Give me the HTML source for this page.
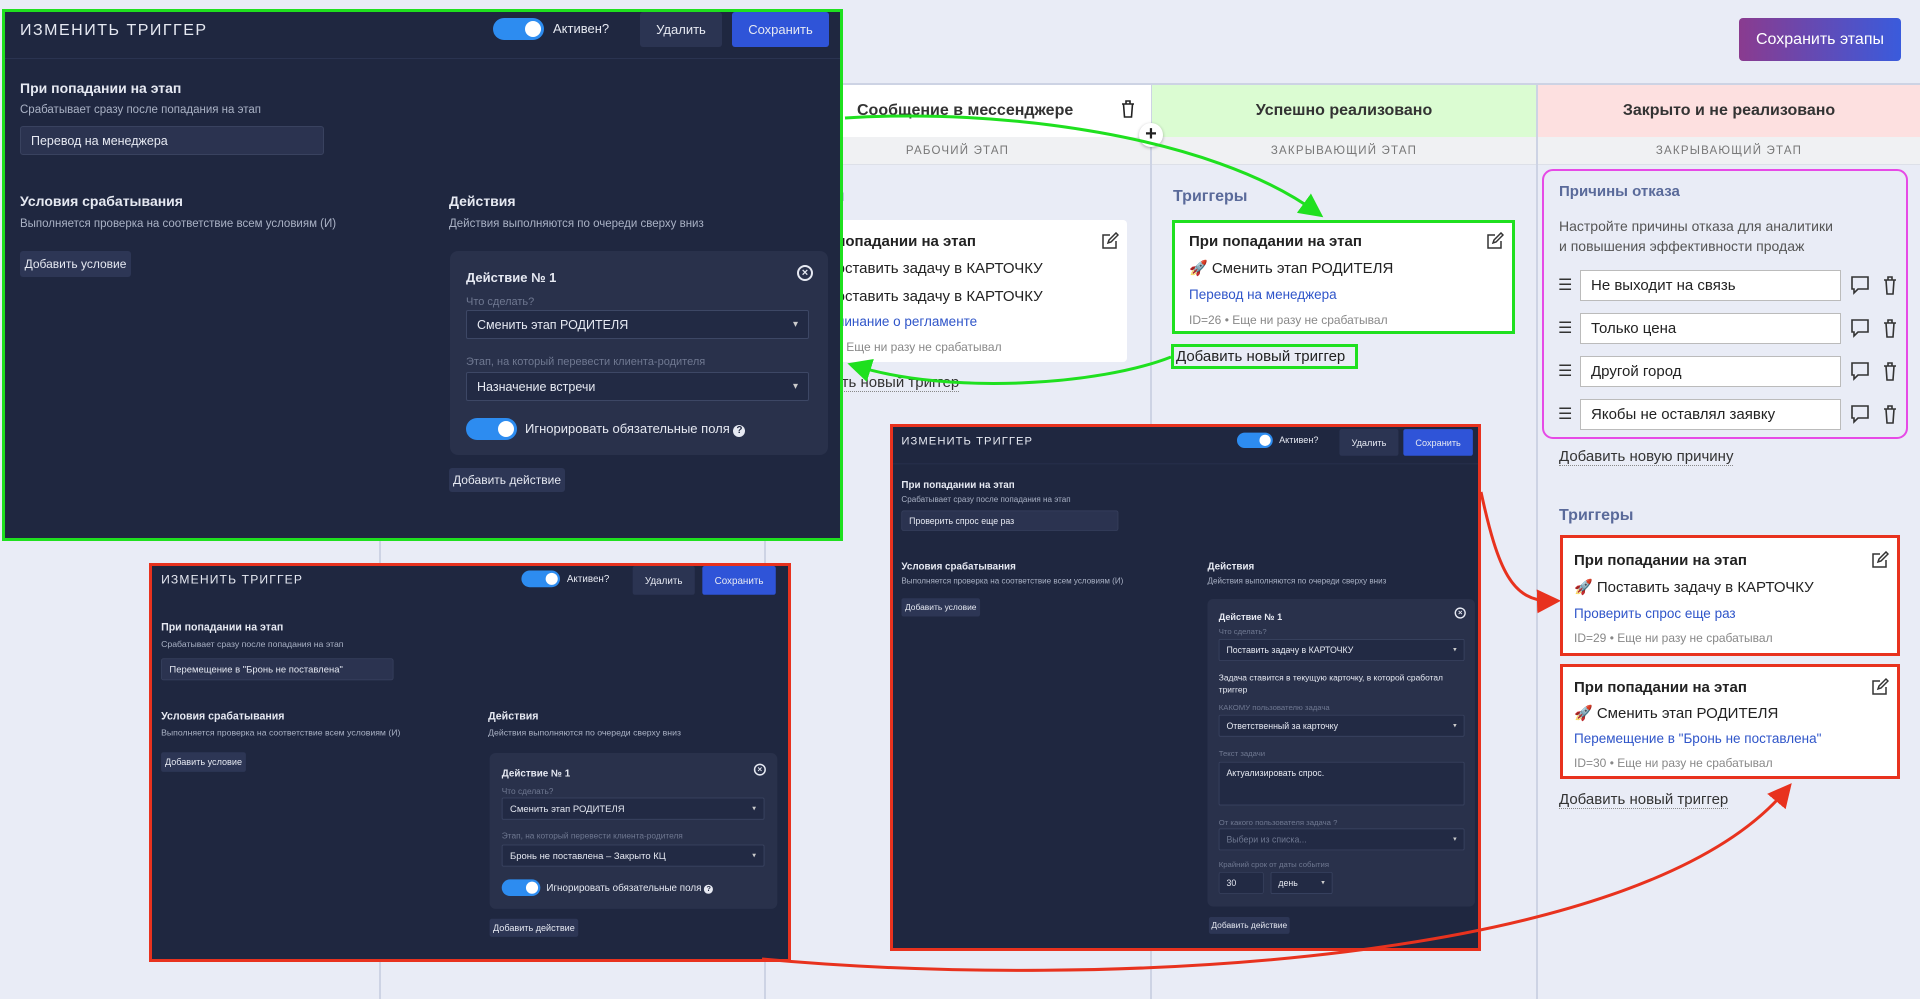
<!DOCTYPE html>
<html><head><meta charset="utf-8">
<style>
*{box-sizing:border-box;margin:0;padding:0}
body{width:1920px;height:999px;background:#e9ecf6;font-family:"Liberation Sans",sans-serif;position:relative;overflow:hidden;color:#222}
.a{position:absolute;white-space:nowrap}
.vl{position:absolute;top:83px;bottom:0;width:2px;background:#cdd3e4}
.colh{position:absolute;top:83px;height:54px;font-weight:bold;font-size:16px;color:#333;display:flex;align-items:center;justify-content:center;border-top:2px solid #cdd3e4}
.cols{position:absolute;top:137px;height:28px;background:#f0f1f3;font-size:11.5px;letter-spacing:1.2px;color:#777;display:flex;align-items:center;justify-content:center;border-bottom:1px solid #dde0e8}
.card{position:absolute;background:#fff}
.bt{font-weight:bold;font-size:15px;color:#222}
.tx{font-size:15px;color:#222}
.lk{font-size:13.5px;color:#2f55c9}
.gr{font-size:12px;color:#888}
.trh{font-weight:bold;font-size:16px;color:#5a6a9a}
.dash{border-bottom:1px dotted #888;font-size:15px;color:#333}
.pan{position:absolute;background:#1f2740;overflow:hidden}
.in{position:absolute;left:0;top:0;width:840px;transform-origin:0 0;color:#e6e9f2}
.in .a{color:#e6e9f2}
.ttl{font-size:16px;letter-spacing:1.5px}
.tg{position:absolute;width:51px;height:22px;border-radius:11px;background:#2d8cf0}
.tg::after{content:"";position:absolute;right:3px;top:3px;width:16px;height:16px;border-radius:50%;background:#fff}
.btn{position:absolute;display:flex;align-items:center;justify-content:center;font-size:13px;color:#e6e9f2;background:#2b3452;border-radius:3px}
.save{background:#2f54d8}
.h{font-weight:bold;font-size:14px}
.s{font-size:11.5px;color:#aab2c5!important}
.m{font-size:11px;color:#6f7891!important}
.inp{position:absolute;background:#2b3350;border:1px solid #39425f;border-radius:3px;font-size:12.5px;color:#e6e9f2;padding-left:10px;display:flex;align-items:center}
.sel{position:absolute;background:#222a44;border:1px solid #3d4765;border-radius:2px;font-size:12.5px;color:#e6e9f2;padding-left:10px;display:flex;align-items:center}
.sel::after{content:"▾";position:absolute;right:10px;font-size:10px;color:#ccc}
.ta{position:absolute;background:#222a44;border:1px solid #3d4765;border-radius:2px;font-size:12.5px;color:#e6e9f2;padding:8px 10px}
.box{position:absolute;background:#29314b;border-radius:8px}
.cl{position:absolute;width:16px;height:16px;border:2px solid #e6e9f2;border-radius:50%;font-size:11px;line-height:12px;text-align:center;color:#e6e9f2;font-weight:bold}
.sb{position:absolute;height:26px;font-size:12px;color:#e6e9f2;background:#2d3655;border-radius:3px;display:flex;align-items:center;justify-content:center}
.rin{position:absolute;left:1580px;width:261px;height:31px;background:#fff;border:1px solid #bbb;font-size:15px;padding-left:10px;display:flex;align-items:center}
.ham{position:absolute;left:1558px;font-size:16px;color:#333}
</style></head><body>

<div class="vl" style="left:379px"></div>
<div class="vl" style="left:764px"></div>
<div class="vl" style="left:1150px"></div>
<div class="vl" style="left:1536px"></div>

<div class="colh" style="left:765px;width:386px;background:#fff;justify-content:flex-start;padding-left:92px">Сообщение в мессенджере</div>
<svg class="a" style="left:1120px;top:99px" width="16" height="20" viewBox="0 0 16 20"><path d="M2 5h12M6 5V2h4v3M3.5 5l1 13h7l1-13" fill="none" stroke="#222" stroke-width="1.6"/></svg>
<div class="colh" style="left:1152px;width:384px;background:#dbfcd2">Успешно реализовано</div>
<div class="colh" style="left:1538px;width:382px;background:#fde0e0">Закрыто и не реализовано</div>
<div class="cols" style="left:765px;width:385px">РАБОЧИЙ ЭТАП</div>
<div class="cols" style="left:1152px;width:384px">ЗАКРЫВАЮЩИЙ ЭТАП</div>
<div class="cols" style="left:1538px;width:382px">ЗАКРЫВАЮЩИЙ ЭТАП</div>
<div class="a" style="left:1139px;top:123px;width:24px;height:24px;border-radius:50%;background:#fff;box-shadow:0 1px 3px rgba(0,0,0,.3);text-align:center;font-size:20px;line-height:23px;font-weight:bold">+</div>

<div class="a" style="left:1739px;top:18px;width:162px;height:43px;border-radius:4px;background:linear-gradient(90deg,#8a3b8f,#3a5bdc);color:#fff;font-size:16px;display:flex;align-items:center;justify-content:center">Сохранить этапы</div>

<div class="a trh" style="left:770px;top:188px">Триггеры</div>
<div class="card" style="left:800px;top:220px;width:327px;height:142px;border-radius:4px"></div>
<div class="a bt" style="left:803px;top:233px">При попадании на этап</div>
<div class="a tx" style="left:803px;top:259px">🚀 Поставить задачу в КАРТОЧКУ</div>
<div class="a tx" style="left:803px;top:287px">🚀 Поставить задачу в КАРТОЧКУ</div>
<div class="a lk" style="left:803px;top:314px">Напоминание о регламенте</div>
<div class="a gr" style="left:803px;top:340px">ID=25 • Еще ни разу не срабатывал</div>
<div class="a dash" style="left:790px;top:374px">Добавить новый триггер</div>
<svg class="a" style="left:1101px;top:232px" width="18" height="18" viewBox="0 0 18 18"><path d="M9 3H2v13h13V9M7 11l1-3 7-7 2 2-7 7z" fill="none" stroke="#333" stroke-width="1.5"/></svg>

<div class="a trh" style="left:1173px;top:188px">Триггеры</div>
<div class="card" style="left:1172px;top:220px;width:343px;height:114px;border:3px solid #1fe01f"></div>
<div class="a bt" style="left:1189px;top:233px">При попадании на этап</div>
<div class="a tx" style="left:1189px;top:259px">🚀 Сменить этап РОДИТЕЛЯ</div>
<div class="a lk" style="left:1189px;top:287px">Перевод на менеджера</div>
<div class="a gr" style="left:1189px;top:313px">ID=26 • Еще ни разу не срабатывал</div>
<svg class="a" style="left:1486px;top:232px" width="18" height="18" viewBox="0 0 18 18"><path d="M9 3H2v13h13V9M7 11l1-3 7-7 2 2-7 7z" fill="none" stroke="#333" stroke-width="1.5"/></svg>
<div class="a" style="left:1171px;top:344px;width:187px;height:25px;border:3px solid #1fe01f;font-size:15px;padding-left:2px;line-height:19px">Добавить новый триггер</div>

<div class="a" style="left:1542px;top:169px;width:366px;height:270px;border:2px solid #e64ae6;border-radius:11px"></div>
<div class="a trh" style="left:1559px;top:183px;font-size:15px">Причины отказа</div>
<div class="a" style="left:1559px;top:216px;font-size:14px;color:#555;line-height:20px">Настройте причины отказа для аналитики<br>и повышения эффективности продаж</div>
<div class="ham" style="top:275px">☰</div><div class="rin" style="top:270px">Не выходит на связь</div>
<div class="ham" style="top:318px">☰</div><div class="rin" style="top:313px">Только цена</div>
<div class="ham" style="top:361px">☰</div><div class="rin" style="top:356px">Другой город</div>
<div class="ham" style="top:404px">☰</div><div class="rin" style="top:399px">Якобы не оставлял заявку</div>
<svg class="a" style="left:1850px;top:275px" width="54" height="150" viewBox="0 0 54 150">
<g fill="none" stroke="#333" stroke-width="1.6">
<g id="ic"><path d="M2 2h16v12H8l-4 4v-4H2z"/><path d="M34 5h12M38 5V2h4v3M36 5l1 14h6l1-14"/></g>
<use href="#ic" y="43"/><use href="#ic" y="86"/><use href="#ic" y="129"/></g></svg>
<div class="a dash" style="left:1559px;top:448px">Добавить новую причину</div>
<div class="a trh" style="left:1559px;top:507px">Триггеры</div>
<div class="card" style="left:1560px;top:535px;width:340px;height:121px;border:3px solid #e8321e"></div>
<div class="a bt" style="left:1574px;top:552px">При попадании на этап</div>
<div class="a tx" style="left:1574px;top:578px">🚀 Поставить задачу в КАРТОЧКУ</div>
<div class="a lk" style="left:1574px;top:606px">Проверить спрос еще раз</div>
<div class="a gr" style="left:1574px;top:631px">ID=29 • Еще ни разу не срабатывал</div>
<div class="card" style="left:1560px;top:664px;width:340px;height:115px;border:3px solid #e8321e"></div>
<div class="a bt" style="left:1574px;top:679px">При попадании на этап</div>
<div class="a tx" style="left:1574px;top:704px">🚀 Сменить этап РОДИТЕЛЯ</div>
<div class="a lk" style="left:1574px;top:731px">Перемещение в "Бронь не поставлена"</div>
<div class="a gr" style="left:1574px;top:756px">ID=30 • Еще ни разу не срабатывал</div>
<svg class="a" style="left:1871px;top:551px" width="18" height="150" viewBox="0 0 18 150"><g fill="none" stroke="#333" stroke-width="1.5"><path d="M9 3H2v13h13V9M7 11l1-3 7-7 2 2-7 7z"/><path d="M9 130H2v13h13v-7M7 138l1-3 7-7 2 2-7 7z"/></g></svg>
<div class="a dash" style="left:1559px;top:791px">Добавить новый триггер</div>

<div class="pan" style="left:2px;top:9px;width:841px;height:532px;border:3px solid #1fe01f">
<div class="in">
<div class="a ttl" style="left:15px;top:10px">ИЗМЕНИТЬ ТРИГГЕР</div>
<div class="tg" style="left:488px;top:6px"></div>
<div class="a" style="left:548px;top:9px;font-size:13px">Активен?</div>
<div class="btn" style="left:635px;top:0;width:82px;height:35px">Удалить</div>
<div class="btn save" style="left:727px;top:0;width:97px;height:35px">Сохранить</div>
<div class="a" style="left:0;top:46px;width:840px;height:1px;background:#2a3350"></div>
<div class="a h" style="left:15px;top:68px">При попадании на этап</div>
<div class="a s" style="left:15px;top:92px">Срабатывает сразу после попадания на этап</div>
<div class="inp" style="left:15px;top:114px;width:304px;height:29px">Перевод на менеджера</div>
<div class="a h" style="left:15px;top:181px">Условия срабатывания</div>
<div class="a s" style="left:15px;top:206px">Выполняется проверка на соответствие всем условиям (И)</div>
<div class="sb" style="left:15px;top:239px;width:111px">Добавить условие</div>
<div class="a h" style="left:444px;top:181px">Действия</div>
<div class="a s" style="left:444px;top:206px">Действия выполняются по очереди сверху вниз</div>
<div class="box" style="left:445px;top:239px;width:378px;height:204px">
<div class="a h" style="left:16px;top:19px;font-size:13px">Действие № 1</div>
<div class="cl" style="left:347px;top:14px">×</div>
<div class="a m" style="left:16px;top:45px">Что сделать?</div>
<div class="sel" style="left:16px;top:59px;width:343px;height:29px">Сменить этап РОДИТЕЛЯ</div>
<div class="a m" style="left:16px;top:105px">Этап, на который перевести клиента-родителя</div>
<div class="sel" style="left:16px;top:121px;width:343px;height:29px">Назначение встречи</div>
<div class="tg" style="left:16px;top:167px"></div>
<div class="a" style="left:75px;top:170px;font-size:13px">Игнорировать обязательные поля <span style="display:inline-block;width:12px;height:12px;border-radius:50%;background:#e6e9f2;color:#1f2740;font-size:10px;text-align:center;line-height:12px;font-weight:bold">?</span></div>
</div>
<div class="sb" style="left:444px;top:456px;width:116px;height:24px">Добавить действие</div>
</div></div>

<div class="pan" style="left:149px;top:563px;width:642px;height:399px;border:3px solid #e8321e">
<div class="in" style="transform:scale(0.757)">
<div class="a ttl" style="left:12px;top:10px">ИЗМЕНИТЬ ТРИГГЕР</div>
<div class="tg" style="left:488px;top:6px"></div>
<div class="a" style="left:548px;top:9px;font-size:13px">Активен?</div>
<div class="btn" style="left:635px;top:0;width:82px;height:38px">Удалить</div>
<div class="btn save" style="left:727px;top:0;width:97px;height:38px">Сохранить</div>
<div class="a h" style="left:12px;top:72px">При попадании на этап</div>
<div class="a s" style="left:12px;top:98px">Срабатывает сразу после попадания на этап</div>
<div class="inp" style="left:12px;top:122px;width:307px;height:29px">Перемещение в "Бронь не поставлена"</div>
<div class="a h" style="left:12px;top:190px">Условия срабатывания</div>
<div class="a s" style="left:12px;top:215px">Выполняется проверка на соответствие всем условиям (И)</div>
<div class="sb" style="left:12px;top:246px;width:112px">Добавить условие</div>
<div class="a h" style="left:444px;top:190px">Действия</div>
<div class="a s" style="left:444px;top:215px">Действия выполняются по очереди сверху вниз</div>
<div class="box" style="left:446px;top:247px;width:380px;height:206px">
<div class="a h" style="left:16px;top:19px;font-size:13px">Действие № 1</div>
<div class="cl" style="left:349px;top:14px">×</div>
<div class="a m" style="left:16px;top:45px">Что сделать?</div>
<div class="sel" style="left:16px;top:59px;width:347px;height:29px">Сменить этап РОДИТЕЛЯ</div>
<div class="a m" style="left:16px;top:104px">Этап, на который перевести клиента-родителя</div>
<div class="sel" style="left:16px;top:121px;width:347px;height:29px">Бронь не поставлена – Закрыто КЦ</div>
<div class="tg" style="left:16px;top:167px"></div>
<div class="a" style="left:75px;top:170px;font-size:13px">Игнорировать обязательные поля <span style="display:inline-block;width:12px;height:12px;border-radius:50%;background:#e6e9f2;color:#1f2740;font-size:10px;text-align:center;line-height:12px;font-weight:bold">?</span></div>
</div>
<div class="sb" style="left:446px;top:466px;width:117px;height:24px">Добавить действие</div>
</div></div>

<div class="pan" style="left:890px;top:424px;width:591px;height:527px;border:3px solid #e8321e">
<div class="in" style="transform:scale(0.702)">
<div class="a ttl" style="left:12px;top:12px">ИЗМЕНИТЬ ТРИГГЕР</div>
<div class="tg" style="left:490px;top:8px"></div>
<div class="a" style="left:550px;top:11px;font-size:13px">Активен?</div>
<div class="btn" style="left:636px;top:3px;width:84px;height:38px">Удалить</div>
<div class="btn save" style="left:727px;top:3px;width:99px;height:38px">Сохранить</div>
<div class="a" style="left:0;top:52px;width:840px;height:1px;background:#2a3350"></div>
<div class="a h" style="left:12px;top:74px">При попадании на этап</div>
<div class="a s" style="left:12px;top:98px">Срабатывает сразу после попадания на этап</div>
<div class="inp" style="left:12px;top:119px;width:309px;height:29px">Проверить спрос еще раз</div>
<div class="a h" style="left:12px;top:190px">Условия срабатывания</div>
<div class="a s" style="left:12px;top:214px">Выполняется проверка на соответствие всем условиям (И)</div>
<div class="sb" style="left:12px;top:244px;width:112px">Добавить условие</div>
<div class="a h" style="left:448px;top:190px">Действия</div>
<div class="a s" style="left:448px;top:214px">Действия выполняются по очереди сверху вниз</div>
<div class="box" style="left:448px;top:245px;width:381px;height:438px">
<div class="a h" style="left:16px;top:18px;font-size:13px">Действие № 1</div>
<div class="cl" style="left:352px;top:12px">×</div>
<div class="a m" style="left:16px;top:41px">Что сделать?</div>
<div class="sel" style="left:16px;top:57px;width:350px;height:31px">Поставить задачу в КАРТОЧКУ</div>
<div class="a" style="left:16px;top:104px;font-size:12px;line-height:17px;white-space:normal;width:350px">Задача ставится в текущую карточку, в которой сработал триггер</div>
<div class="a m" style="left:16px;top:149px">КАКОМУ пользователю задача</div>
<div class="sel" style="left:16px;top:165px;width:350px;height:31px">Ответственный за карточку</div>
<div class="a m" style="left:16px;top:215px">Текст задачи</div>
<div class="ta" style="left:16px;top:232px;width:350px;height:62px">Актуализировать спрос.</div>
<div class="a m" style="left:16px;top:313px">От какого пользователя задача ?</div>
<div class="sel" style="left:16px;top:327px;width:350px;height:31px;color:#6f7891">Выбери из списка...</div>
<div class="a m" style="left:16px;top:373px">Крайний срок от даты события</div>
<div class="inp" style="left:16px;top:389px;width:64px;height:31px;background:#222a44">30</div>
<div class="sel" style="left:90px;top:389px;width:88px;height:31px">день</div>
</div>
<div class="sb" style="left:450px;top:698px;width:115px;height:24px">Добавить действие</div>
</div></div>

<svg class="a" style="left:0;top:0" width="1920" height="999">
<defs>
<marker id="mg" markerWidth="8" markerHeight="8" refX="5" refY="4" orient="auto"><path d="M0,0L8,4L0,8z" fill="#1fe01f"/></marker>
<marker id="mr" markerWidth="8" markerHeight="8" refX="5" refY="4" orient="auto"><path d="M0,0L8,4L0,8z" fill="#e8321e"/></marker>
</defs>
<g fill="none" stroke-width="3">
<path d="M845,118 C1000,108 1210,135 1316,212" stroke="#1fe01f" marker-end="url(#mg)"/>
<path d="M1171,357 C1100,385 950,395 856,366" stroke="#1fe01f" marker-end="url(#mg)"/>
<path d="M1481,492 C1498,570 1512,602 1552,601" stroke="#e8321e" marker-end="url(#mr)"/>
<path d="M762,959 C1100,990 1640,965 1786,790" stroke="#e8321e" marker-end="url(#mr)"/>
</g></svg>
</body></html>
